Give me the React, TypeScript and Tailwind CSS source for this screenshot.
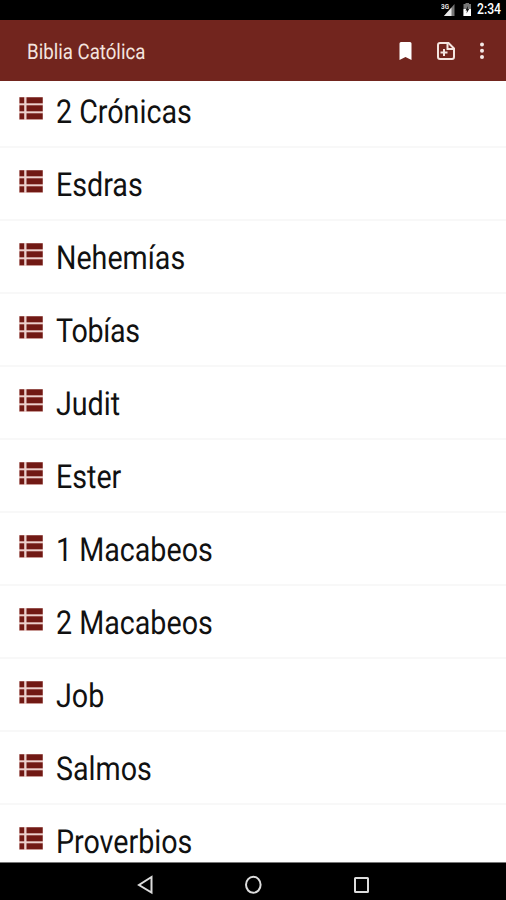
const books = [
  '2 Crónicas', 'Esdras', 'Nehemías', 'Tobías', 'Judit', 'Ester',
  '1 Macabeos', '2 Macabeos', 'Job', 'Salmos', 'Proverbios',
];

function ListIcon() {
  return (
    <svg width="24" height="23" viewBox="0 0 24 23" className="mt-[22px] shrink-0">
      <rect width="24" height="23" fill="#ecd0cc" />
      {[0, 8, 16].map((y) => (
        <g key={y} fill="#711914">
          <rect x="0.5" y={y + 0.3} width="4.7" height="6" />
          <rect x="7.5" y={y + 0.3} width="16.2" height="6" />
        </g>
      ))}
    </svg>
  );
}

function BookRow({ name }: { name: string }) {
  const tracking = name.startsWith('T') ? 'tracking-[-0.35px]' : 'tracking-normal';
  return (
    <li className="flex h-[73px] shrink-0 items-start gap-[13px] border-b-2 border-[#f8f8f8] pl-[19px]">
      <ListIcon />
      <span className={`mt-[18px] origin-left scale-x-[0.868] whitespace-nowrap text-[33px] leading-[39px] text-[#111] [text-rendering:geometricPrecision] ${tracking}`}>
        {name}
      </span>
    </li>
  );
}

export default function App() {
  return (
    <div className="flex h-[900px] w-[506px] flex-col overflow-hidden bg-white font-['Roboto',sans-serif]">
      <div className="flex h-5 shrink-0 items-start justify-end bg-black pr-[5px] text-white">
        <svg width="36" height="20" viewBox="0 0 36 20" fill="#e8e8e8">
          <path d="M13.500 4v12H3z" fill="#777" />
          <path d="M10.500 7.500V16H3z" />
          <text x="0" y="9" fontSize="8" fontWeight="700" textLength="8" lengthAdjust="spacingAndGlyphs">3G</text>
          <path d="M22.500 4h2V3h3.500v1h2v12h-7.500z" fill="#777" />
          <path d="M22.500 9h7.500v7h-7.500z" fill="#fff" />
          <path d="M27 6l-2.500 4.500H26l-.5 3 2.700-4.500h-1.500z" fill="#111" />
        </svg>
        <span className="w-[24px] whitespace-nowrap text-[14px] font-medium leading-[19px]">
          <span className="inline-block origin-left scale-x-[0.87]">2:34</span>
        </span>
      </div>
      <header className="flex h-[61px] shrink-0 items-center bg-[#72251e] pl-[27px] pr-[17px]">
        <h1 className="mt-1 origin-left scale-x-[0.868] whitespace-nowrap text-[21.5px] leading-[26px] text-[#f4e4df] [text-rendering:geometricPrecision]">Biblia Católica</h1>
        <svg className="ml-auto" width="92" height="22" viewBox="397 40 92 22">
          <path d="M399.500 43.500q0-1.500 1.500-1.500h9q1.500 0 1.500 1.500V60l-6-3-6 3z" fill="#fff" />
          <path d="M440 43h8.500l5.500 5.500V57q0 2-2 2h-12q-2 0-2-2V45q0-2 2-2z" fill="none" stroke="#f4e4df" strokeWidth="2" />
          <path d="M447.500 43.500V49h6" fill="none" stroke="#f4e4df" strokeWidth="2" />
          <path d="M444 49v7M440.500 52.500h7" stroke="#f4e4df" strokeWidth="2" />
          <g fill="#f4e9e7">
            <circle cx="482" cy="44.500" r="2" />
            <circle cx="482" cy="50.700" r="2" />
            <circle cx="482" cy="57" r="2" />
          </g>
        </svg>
      </header>
      <main className="flex-1 overflow-hidden">
        <ul className="-mt-[6px] flex flex-col">
          {books.map((name) => (
            <BookRow key={name} name={name} />
          ))}
        </ul>
      </main>
      <nav className="flex h-[38px] shrink-0 items-start border-t border-[#777] bg-black">
        <svg width="506" height="37" viewBox="0 863 506 37" fill="none" stroke="#dcdcdc" strokeWidth="2">
          <path d="M151.500 877v15.500L139 885z" />
          <ellipse cx="253.300" cy="884.800" rx="7.300" ry="8" />
          <rect x="355" y="878" width="13" height="14" rx="0.500" />
        </svg>
      </nav>
    </div>
  );
}
